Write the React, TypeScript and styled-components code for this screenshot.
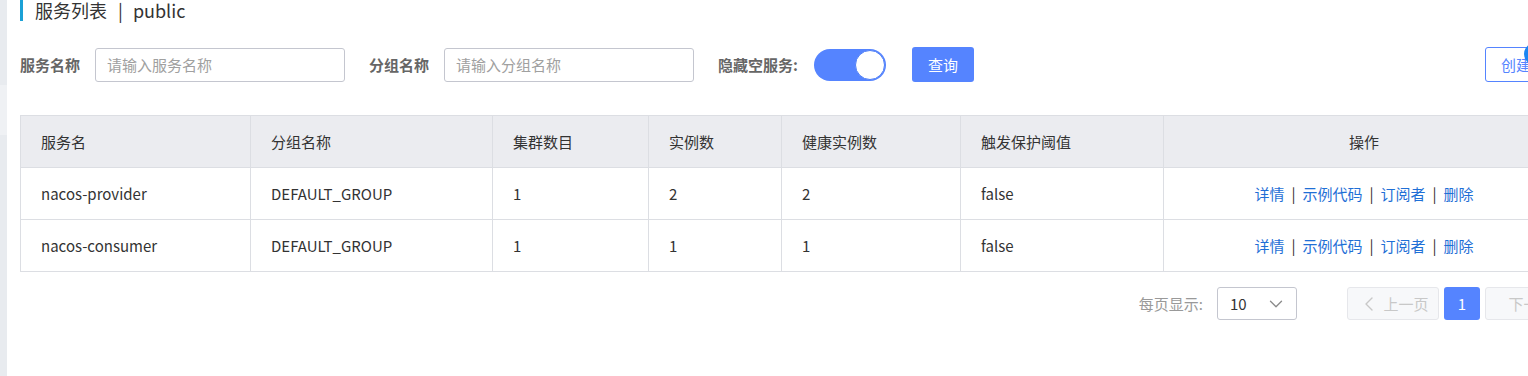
import React from 'react';
import styled, { createGlobalStyle } from 'styled-components';
import { ChevronDown, ChevronLeft } from 'lucide-react';

const GlobalStyle = createGlobalStyle`
  body {
    margin: 0;
    background: #ffffff;
    font-family: 'Noto Sans CJK SC', 'Liberation Sans', sans-serif;
    color: #333333;
    overflow: hidden;
  }
`;

interface ServiceRow {
  name: string;
  group: string;
  clusters: number;
  instances: number;
  healthy: number;
  threshold: string;
}

const rows: ServiceRow[] = [
  { name: 'nacos-provider', group: 'DEFAULT_GROUP', clusters: 1, instances: 2, healthy: 2, threshold: 'false' },
  { name: 'nacos-consumer', group: 'DEFAULT_GROUP', clusters: 1, instances: 1, healthy: 1, threshold: 'false' },
];

const columns = [
  { title: '服务名', width: 230 },
  { title: '分组名称', width: 242 },
  { title: '集群数目', width: 156 },
  { title: '实例数', width: 133 },
  { title: '健康实例数', width: 179 },
  { title: '触发保护阈值', width: 203 },
  { title: '操作', width: 401, center: true },
];

const actions = ['详情', '示例代码', '订阅者', '删除'];

const App: React.FC = () => {
  return (
    <>
      <GlobalStyle />
      <Page>
        <SideStrip>
          <SideItem $height={85} />
          <SideItem $height={50} $light />
          <SideItem $height={241} />
        </SideStrip>

        <Main>
          <Title>
            服务列表<TitleBar>|</TitleBar>public
          </Title>

          <FormRow>
            <Field>
              <Label>服务名称</Label>
              <TextInput placeholder="请输入服务名称" />
            </Field>
            <Field>
              <Label>分组名称</Label>
              <TextInput placeholder="请输入分组名称" />
            </Field>
            <Field>
              <Label>隐藏空服务:</Label>
              <Switch>
                <Knob />
              </Switch>
            </Field>
            <PrimaryButton>查询</PrimaryButton>
            <CreateWrap>
              <CreateButton>创建服务</CreateButton>
              <HelpDot />
            </CreateWrap>
          </FormRow>

          <Table>
            <colgroup>
              {columns.map((c) => (
                <col key={c.title} style={{ width: c.width }} />
              ))}
            </colgroup>
            <thead>
              <tr>
                {columns.map((c) => (
                  <Th key={c.title} $center={c.center}>
                    {c.title}
                  </Th>
                ))}
              </tr>
            </thead>
            <tbody>
              {rows.map((r) => (
                <tr key={r.name}>
                  <Td>{r.name}</Td>
                  <Td>{r.group}</Td>
                  <Td>{r.clusters}</Td>
                  <Td>{r.instances}</Td>
                  <Td>{r.healthy}</Td>
                  <Td>{r.threshold}</Td>
                  <Td $center>
                    {actions.map((a, i) => (
                      <React.Fragment key={a}>
                        {i > 0 && <Divider>|</Divider>}
                        <ActionLink>{a}</ActionLink>
                      </React.Fragment>
                    ))}
                  </Td>
                </tr>
              ))}
            </tbody>
          </Table>

          <Pagination>
            <PageSizeLabel>每页显示:</PageSizeLabel>
            <Select>
              <span>10</span>
              <ChevronDown size={22} color="#8a8a8a" strokeWidth={1.4} />
            </Select>
            <PagerGroup>
              <PagerButton disabled>
                <ChevronLeft size={24} color="#c8c8c8" strokeWidth={1.4} />
                上一页
              </PagerButton>
              <PageNumber>1</PageNumber>
              <PagerButton disabled>下一页</PagerButton>
            </PagerGroup>
          </Pagination>
        </Main>
      </Page>
    </>
  );
};

const Page = styled.div`
  display: flex;
  width: 1528px;
  height: 376px;
  overflow: hidden;
`;

const SideStrip = styled.div`
  display: flex;
  flex-direction: column;
  width: 7px;
  flex-shrink: 0;
`;

const SideItem = styled.div<{ $height: number; $light?: boolean }>`
  height: ${(p) => p.$height}px;
  background: ${(p) => (p.$light ? '#eff1f4' : '#e8ebef')};
`;

const Main = styled.div`
  display: flex;
  flex-direction: column;
  flex-shrink: 0;
  width: 1557px;
  padding-left: 13px;
`;

const Title = styled.div`
  height: 21px;
  line-height: 20px;
  border-left: 3px solid #1ba1d6;
  padding-left: 12px;
  font-size: 18px;
  color: #333333;
  white-space: nowrap;
`;

const TitleBar = styled.span`
  margin: 0 10px 0 11px;
`;

const FormRow = styled.div`
  display: flex;
  align-items: center;
  margin-top: 26px;
  height: 35px;
`;

const Field = styled.div`
  display: flex;
  align-items: center;
  margin-right: 24px;
`;

const Label = styled.span`
  font-size: 15px;
  font-weight: 700;
  color: #666666;
  margin-right: 15px;
  white-space: nowrap;
`;

const TextInput = styled.input`
  box-sizing: border-box;
  width: 250px;
  height: 34px;
  border: 1px solid #c4c6cf;
  border-radius: 3px;
  padding: 0 11px;
  font-family: 'Noto Sans CJK SC', sans-serif;
  font-size: 15px;
  color: #333333;
  outline: none;

  &::placeholder {
    color: #a0a0a0;
  }
`;

const Switch = styled.div`
  box-sizing: border-box;
  display: flex;
  align-items: center;
  justify-content: flex-end;
  width: 72px;
  height: 32px;
  margin-left: 1px;
  border-radius: 16px;
  background: #5584ff;
  padding: 1px;
`;

const Knob = styled.div`
  box-sizing: border-box;
  width: 30px;
  height: 30px;
  border-radius: 50%;
  background: #ffffff;
  border: 1px solid #4f7ff7;
`;

const PrimaryButton = styled.button`
  width: 62px;
  height: 35px;
  margin-left: 2px;
  border: none;
  border-radius: 3px;
  background: #5584ff;
  color: #ffffff;
  font-family: 'Noto Sans CJK SC', sans-serif;
  font-size: 15px;
  cursor: pointer;
`;

const CreateWrap = styled.div`
  position: relative;
  margin-left: auto;
`;

const CreateButton = styled.button`
  box-sizing: border-box;
  width: 92px;
  height: 35px;
  border: 1px solid #5584ff;
  border-radius: 3px;
  background: #ffffff;
  color: #5584ff;
  font-family: 'Noto Sans CJK SC', sans-serif;
  font-size: 15px;
  text-align: left;
  padding: 0 0 0 15px;
  white-space: nowrap;
`;

const HelpDot = styled.span`
  position: absolute;
  top: -4px;
  left: 39px;
  box-sizing: border-box;
  width: 22px;
  height: 22px;
  border-radius: 50%;
  border: 4px solid #1b86f3;
  background: #ffffff;
`;

const Table = styled.table`
  margin-top: 33px;
  width: 1544px;
  table-layout: fixed;
  border-collapse: collapse;
  font-size: 15px;
`;

const Th = styled.th<{ $center?: boolean }>`
  height: 51px;
  padding: 0 20px;
  background: #ebecf0;
  border: 1px solid #dcdee3;
  font-weight: 400;
  color: #333333;
  text-align: ${(p) => (p.$center ? 'center' : 'left')};
`;

const Td = styled.td<{ $center?: boolean }>`
  height: 51px;
  padding: 0 20px;
  border: 1px solid #dcdee3;
  color: #333333;
  text-align: ${(p) => (p.$center ? 'center' : 'left')};
  white-space: nowrap;
`;

const ActionLink = styled.a`
  color: #1f6fd6;
  cursor: pointer;
`;

const Divider = styled.span`
  color: #333333;
  margin: 0 7px;
`;

const Pagination = styled.div`
  display: flex;
  align-items: center;
  justify-content: flex-end;
  margin-top: 15px;
  height: 33px;
`;

const PageSizeLabel = styled.span`
  font-size: 15px;
  color: #999999;
  margin-right: 14px;
`;

const Select = styled.div`
  box-sizing: border-box;
  display: flex;
  align-items: center;
  justify-content: space-between;
  width: 80px;
  height: 33px;
  padding: 0 9px 0 12px;
  border: 1px solid #c4c6cf;
  border-radius: 3px;
  font-size: 15px;
  color: #333333;
`;

const PagerGroup = styled.div`
  display: flex;
  gap: 5px;
  margin-left: 50px;
`;

const PagerButton = styled.button`
  box-sizing: border-box;
  display: flex;
  align-items: center;
  justify-content: center;
  gap: 2px;
  width: 92px;
  height: 33px;
  border: 1px solid #e6e7eb;
  border-radius: 3px;
  background: #f7f8fa;
  color: #c8c8c8;
  font-family: 'Noto Sans CJK SC', sans-serif;
  font-size: 15px;
  padding: 0;
`;

const PageNumber = styled.button`
  width: 36px;
  height: 33px;
  border: none;
  border-radius: 3px;
  background: #5584ff;
  color: #ffffff;
  font-family: 'Noto Sans CJK SC', sans-serif;
  font-size: 15px;
  padding: 0;
`;

export default App;
